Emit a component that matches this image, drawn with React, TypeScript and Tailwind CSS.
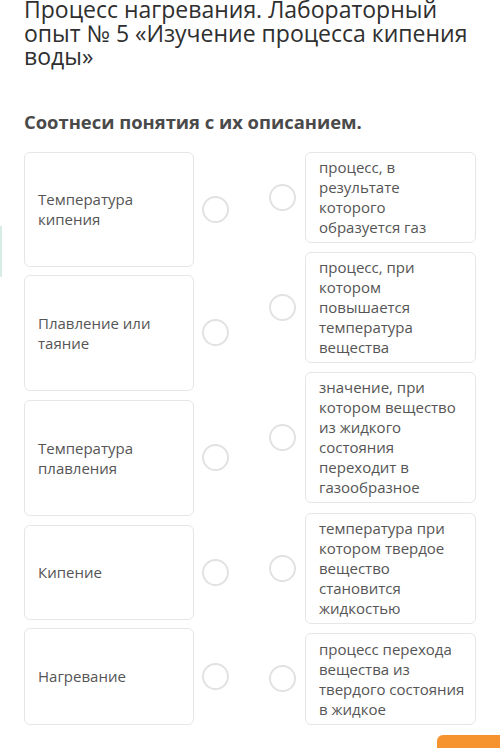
import React from "react";

const left = [
  { text: "Температура\nкипения", h: 115, mt: 0 },
  { text: "Плавление или\nтаяние", h: 116, mt: 8 },
  { text: "Температура\nплавления", h: 116, mt: 9 },
  { text: "Кипение", h: 95, mt: 9 },
  { text: "Нагревание", h: 97, mt: 8 },
];

const right = [
  { text: "процесс, в\nрезультате\nкоторого\nобразуется газ", h: 91, mt: 0 },
  { text: "процесс, при\nкотором\nповышается\nтемпература\nвещества", h: 111, mt: 9 },
  { text: "значение, при\nкотором вещество\nиз жидкого\nсостояния\nпереходит в\nгазообразное", h: 131, mt: 9 },
  { text: "температура при\nкотором твердое\nвещество\nстановится\nжидкостью", h: 111, mt: 10 },
  { text: "процесс перехода\nвещества из\nтвердого состояния\nв жидкое", h: 92, mt: 9 },
];

function Circle() {
  return <div className="w-[27px] h-[27px] rounded-full border-2 border-[#e2e2e2] bg-white shrink-0" />;
}

export default function App() {
  return (
    <div
      className="relative w-[500px] h-[748px] bg-white overflow-hidden"
      style={{ fontFamily: '"Open Sans", "Noto Sans", sans-serif' }}
    >
      <div className="absolute left-0 top-[226px] w-[2px] h-[51px] bg-[#d6ece4]" />
      <div className="pl-[24px]">
        <h1 className="mt-[-2px] text-[23px] leading-[23.5px] text-[#2f2f2f] font-normal w-[450px]">
          Процесс нагревания. Лабораторный опыт № 5 «Изучение процесса кипения воды»
        </h1>
        <h2 className="mt-[41px] text-[18.4px] leading-[24px] font-bold text-[#4a4a4a]">
          Соотнеси понятия с их описанием.
        </h2>
        <div className="mt-[18px] flex">
          <div className="flex flex-col">
            {left.map((item, i) => (
              <div key={i} className="flex items-center" style={{ marginTop: item.mt }}>
                <div
                  className="w-[170px] border border-[#e6e6e6] rounded-[6px] flex items-center pl-[13px] pr-[8px] text-[15px] leading-[20px] text-[#555] whitespace-pre-line"
                  style={{ height: item.h }}
                >
                  {item.text}
                </div>
                <div className="ml-[8px]">
                  <Circle />
                </div>
              </div>
            ))}
          </div>
          <div className="flex flex-col ml-[40px]">
            {right.map((item, i) => (
              <div key={i} className="flex items-center" style={{ marginTop: item.mt }}>
                <Circle />
                <div
                  className="ml-[9px] w-[171px] border border-[#e6e6e6] rounded-[6px] flex items-center pl-[13px] pr-[4px] text-[15px] leading-[20px] text-[#555] whitespace-pre-line"
                  style={{ height: item.h }}
                >
                  {item.text}
                </div>
              </div>
            ))}
          </div>
        </div>
      </div>
      <div className="absolute left-[437px] top-[735px] w-[63px] h-[20px] bg-[#f7932f] rounded-tl-[6px]" />
    </div>
  );
}
